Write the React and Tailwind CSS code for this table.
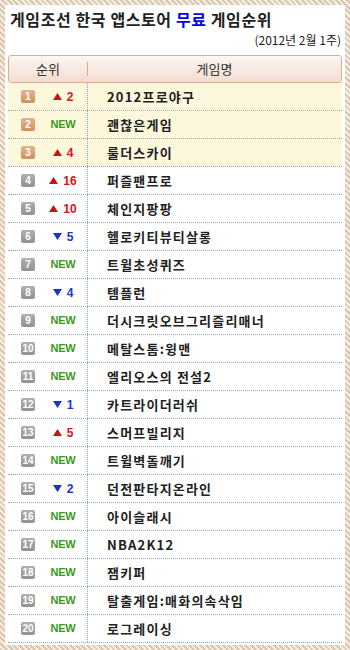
import React from "react";

const rows = [
  { rank: 1, dir: "up", n: 2, name: "2012프로야구" },
  { rank: 2, dir: "new", name: "괜찮은게임" },
  { rank: 3, dir: "up", n: 4, name: "룰더스카이" },
  { rank: 4, dir: "up", n: 16, name: "퍼즐팬프로" },
  { rank: 5, dir: "up", n: 10, name: "체인지팡팡" },
  { rank: 6, dir: "down", n: 5, name: "헬로키티뷰티살롱" },
  { rank: 7, dir: "new", name: "트윌초성퀴즈" },
  { rank: 8, dir: "down", n: 4, name: "템플런" },
  { rank: 9, dir: "new", name: "더시크릿오브그리즐리매너" },
  { rank: 10, dir: "new", name: "메탈스톰:윙맨" },
  { rank: 11, dir: "new", name: "엘리오스의 전설2" },
  { rank: 12, dir: "down", n: 1, name: "카트라이더러쉬" },
  { rank: 13, dir: "up", n: 5, name: "스머프빌리지" },
  { rank: 14, dir: "new", name: "트윌벽돌깨기" },
  { rank: 15, dir: "down", n: 2, name: "던전판타지온라인" },
  { rank: 16, dir: "new", name: "아이슬래시" },
  { rank: 17, dir: "new", name: "NBA2K12" },
  { rank: 18, dir: "new", name: "잼키퍼" },
  { rank: 19, dir: "new", name: "탈출게임:매화의속삭임" },
  { rank: 20, dir: "new", name: "로그레이싱" },
];

const font = "font-['Noto_Sans_CJK_KR','Noto_Sans',sans-serif]";

function Change({ dir, n }) {
  if (dir === "new")
    return <span className="font-['Liberation_Sans',sans-serif] text-[11px] font-bold tracking-[-0.3px] text-[#3b9a1e]">NEW</span>;
  const up = dir === "up";
  return (
    <span className="flex items-center gap-[5px]">
      <svg width="9" height="7" viewBox="0 0 9 7">
        {up ? <polygon points="4.5,0 9,7 0,7" fill="#d01010" /> : <polygon points="0,0 9,0 4.5,7" fill="#1c2fc8" />}
      </svg>
      <span className={`font-['Liberation_Sans',sans-serif] text-[12px] font-bold ${up ? "text-[#d8141a]" : "text-[#2036d0]"}`}>{n}</span>
    </span>
  );
}

export default function App() {
  return (
    <div className="h-[650px] w-[350px] bg-[repeating-linear-gradient(45deg,#dcc8b0_0_2px,#f5ede2_2px_4px)] p-[5px]">
      <div className={`flex h-full flex-col bg-white ${font}`}>
        <h1 className="ml-[5px] mt-[2px] text-[16px] font-bold leading-[24px] tracking-[0.6px] text-[#222]">
          게임조선 한국 앱스토어 <span className="text-[#0000ee]">무료</span> 게임순위
        </h1>
        <div className="mr-[4px] mt-[2px] text-right text-[12px] leading-[14px] text-[#222]">(2012년 2월 1주)</div>
        <div className="mx-[3px] mt-[8px] flex h-[28px] items-center rounded-[3px] border border-[#dcae94] bg-[linear-gradient(#fdf6f2,#f3dcd0)] text-[13px] text-[#333]">
          <div className="w-[78px] text-center">순위</div>
          <div className="h-[14px] w-px bg-[#d9a98a]" />
          <div className="flex-1 text-center">게임명</div>
        </div>
        <div className="mx-[3px]">
          {rows.map((r) => {
            const top = r.rank <= 3;
            return (
              <div
                key={r.rank}
                className={`flex h-[28px] items-center border-b border-dotted border-[#86a8be] ${top ? "bg-[#fdf8db]" : "bg-white"}`}
              >
                <div className="flex w-[79px] items-center">
                  <span
                    className={`ml-[13px] flex h-[13px] w-[14px] items-center justify-center rounded-[2px] font-['Liberation_Sans',sans-serif] text-[10px] font-bold text-white ${top ? "bg-[linear-gradient(#e4b48c,#cf925f)]" : "bg-[linear-gradient(#b0b0b0,#929292)]"}`}
                  >
                    {r.rank}
                  </span>
                  <span className="flex flex-1 justify-center pl-[4px]">
                    <Change dir={r.dir} n={r.n} />
                  </span>
                </div>
                <div className="h-full border-l border-dotted border-[#86a8be]" />
                <div className="pl-[19px] text-[13px] font-bold tracking-[1.2px] text-[#222]">{r.name}</div>
              </div>
            );
          })}
        </div>
      </div>
    </div>
  );
}
